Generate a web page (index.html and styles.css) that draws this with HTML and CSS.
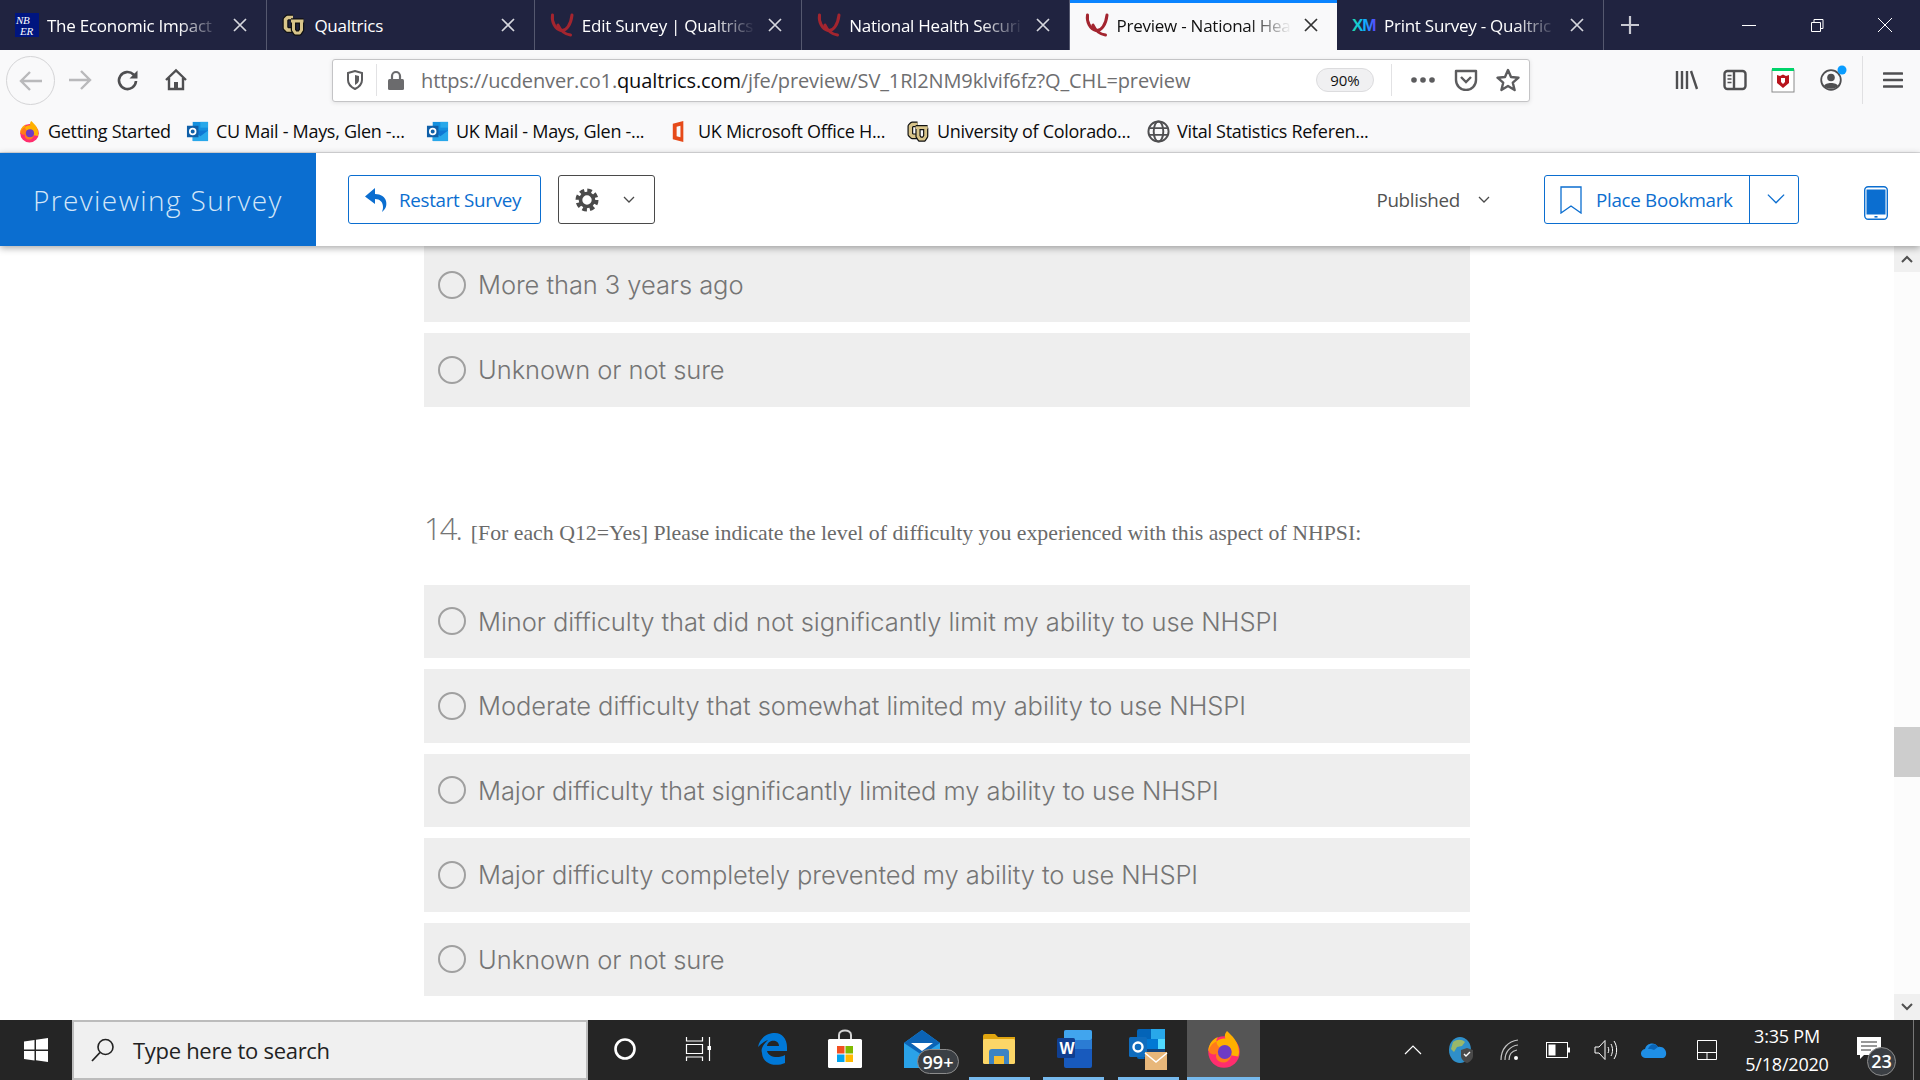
FILE: index.html
```html
<!DOCTYPE html>
<html lang="en">
<head>
<meta charset="utf-8">
<title>Preview - National Health Security Survey</title>
<link rel="stylesheet" href="styles.css">
</head>
<body>
<svg class="defs" width="0" height="0" aria-hidden="true">
  <defs>
    <symbol id="q" viewBox="0 0 24 24"><path d="M2.500 2C1.500 9 5 16 11 17.500 16.500 18.500 21 11 22 2M8 12C10 16.500 13.500 21 20.500 22" fill="none" stroke="#a3252f" stroke-width="3" stroke-linecap="round"/></symbol>
    <symbol id="cu" viewBox="0 0 24 24"><g fill="none" stroke-linejoin="round"><path d="M11 4.500H5.500L3.500 6.500V15L5.500 17H11" stroke="#111" stroke-width="6"/><path d="M11 4.500H5.500L3.500 6.500V15L5.500 17H11" stroke="#d8c48a" stroke-width="3.500"/><path d="M9 8H21.500M11.500 8V17L13.500 20H17.500L19.500 17V8" stroke="#111" stroke-width="5.500"/><path d="M9 8H21.500M11.500 8V17L13.500 20H17.500L19.500 17V8" stroke="#d8c48a" stroke-width="3"/></g></symbol>
    <symbol id="ol" viewBox="0 0 24 24"><rect x="7" y="2" width="16" height="11" fill="#1490df"/><rect x="15" y="2" width="8" height="6" fill="#28a8ea"/><path d="M7 11h16v11H7z" fill="#0f78d4"/><path d="M7 11l8 6 8-6v11H7z" fill="#28a8ea"/><rect x="1" y="6" width="12" height="12" fill="#0f5fa8"/><circle cx="7" cy="12" r="3" fill="none" stroke="#fff" stroke-width="1.800"/></symbol>
    <symbol id="x" viewBox="0 0 16 16"><path d="M2 2l12 12M14 2L2 14" fill="none" stroke="currentColor" stroke-width="1.700"/></symbol>
    <symbol id="chev" viewBox="0 0 12 8"><path d="M1 1l5 5 5-5" fill="none" stroke="currentColor"/></symbol>
    <symbol id="ff" viewBox="0 0 24 26"><circle cx="12" cy="15" r="10.500" fill="#ff2d6e"/><path d="M1.500 14C2 9 5 6 8 5c-1 1-1 2-1 3 2-2 4-2 6-2-1-2 0-4 1-5 3 3 8 7 8 14 0 1-.2 2-.6 3L4 15z" fill="#ffb000"/><path d="M2 15c0-3 2-6 5-7 0 2 1 3 2 4 3-2 7-1 8 2 1 4-2 8-5 8-5 0-6-4-5-6-1 1-3 1-5-1z" fill="#ff7a1a"/><circle cx="12.500" cy="15" r="4.600" fill="#6e3bc4"/></symbol>
  </defs>
</svg>

<div class="tabbar">
  <div class="tab">
    <svg class="fav" viewBox="0 0 24 24"><rect width="24" height="24" fill="#00157f"/><text x="1" y="11" class="nber">NB</text><text x="5" y="22" class="nber">ER</text></svg>
    <span class="tab-title">The Economic Impact</span>
    <svg class="close"><use href="#x"/></svg>
  </div>
  <div class="tab">
    <svg class="fav"><use href="#cu"/></svg>
    <span class="tab-title tab-title-full">Qualtrics</span>
    <svg class="close"><use href="#x"/></svg>
  </div>
  <div class="tab">
    <svg class="fav"><use href="#q"/></svg>
    <span class="tab-title">Edit Survey | Qualtrics</span>
    <svg class="close"><use href="#x"/></svg>
  </div>
  <div class="tab">
    <svg class="fav"><use href="#q"/></svg>
    <span class="tab-title">National Health Securi</span>
    <svg class="close"><use href="#x"/></svg>
  </div>
  <div class="tab tab-active">
    <svg class="fav"><use href="#q"/></svg>
    <span class="tab-title">Preview - National Hea</span>
    <svg class="close"><use href="#x"/></svg>
  </div>
  <div class="tab">
    <svg class="fav" viewBox="0 0 24 24"><defs><linearGradient id="xm" x1="0" x2="1"><stop offset="0" stop-color="#21dbaa"/><stop offset=".5" stop-color="#0bb6ff"/><stop offset="1" stop-color="#5f3dff"/></linearGradient></defs><text x="0" y="18" class="xm" fill="url(#xm)">XM</text></svg>
    <span class="tab-title">Print Survey - Qualtric</span>
    <svg class="close"><use href="#x"/></svg>
  </div>
  <div class="newtab">
    <svg width="20" height="20" viewBox="0 0 20 20"><path d="M10 1v18M1 10h18" stroke="#c8c9d2" stroke-width="2.200"/></svg>
  </div>
  <div class="winctl">
    <svg width="16" height="16" viewBox="0 0 16 16"><path d="M1 8.500h14" stroke="#fff"/></svg>
    <svg width="16" height="16" viewBox="0 0 16 16"><path d="M2.500 5.500h9v9h-9zM5 5V2.500h9v9h-2.500" fill="none" stroke="#fff"/></svg>
    <svg width="16" height="16" viewBox="0 0 16 16"><path d="M1 1l14 14M15 1L1 15" stroke="#fff"/></svg>
  </div>
</div>

<div class="navbar">
  <div class="back">
    <svg width="26" height="24" viewBox="0 0 26 24"><path d="M24 12H3M12 3l-9 9 9 9" fill="none" stroke="#b9b9bb" stroke-width="2.400"/></svg>
  </div>
  <div class="navbtn">
    <svg width="26" height="24" viewBox="0 0 26 24"><path d="M2 12h21M14 3l9 9-9 9" fill="none" stroke="#b9b9bb" stroke-width="2.400"/></svg>
  </div>
  <div class="navbtn">
    <svg width="24" height="24" viewBox="0 0 24 24"><path d="M20 13a8.500 8.500 0 1 1-2.500-6.500L20 9" fill="none" stroke="#4f4f51" stroke-width="2.600"/><path d="M21.500 2.500v8h-8z" fill="#4f4f51"/></svg>
  </div>
  <div class="navbtn">
    <svg width="24" height="24" viewBox="0 0 24 24"><path d="M2 12L12 2.500 22 12M5 10v11h14V10" fill="none" stroke="#4f4f51" stroke-width="2.400"/><rect x="10" y="14" width="4" height="7" fill="#4f4f51"/></svg>
  </div>
  <div class="urlbar">
    <div class="shield">
      <svg width="18" height="20" viewBox="0 0 18 20"><path d="M2 3l7-2 7 2v7c0 4-3 7-7 9-4-2-7-5-7-9z" fill="none" stroke="#5c5c5e" stroke-width="2"/><path d="M9 5l4 1v4c0 2-2 4-4 5z" fill="#5c5c5e"/></svg>
    </div>
    <div class="lock">
      <svg width="18" height="21" viewBox="0 0 18 21"><path d="M5 9V6a4 4 0 0 1 8 0v3" fill="none" stroke="#6b6b6d" stroke-width="2.200"/><rect x="1" y="9" width="16" height="11" rx="1.500" fill="#6b6b6d"/></svg>
    </div>
    <div class="url"><span class="url-dim">https://ucdenver.co1.</span><span class="url-host">qualtrics.com</span><span class="url-dim">/jfe/preview/SV_1Rl2NM9klvif6fz?Q_CHL=preview</span></div>
    <div class="zoompill">90%</div>
    <div class="urlsep"></div>
    <div class="urlicons">
      <svg width="26" height="8" viewBox="0 0 26 8"><circle cx="4" cy="4" r="2.800" fill="#5c5c5e"/><circle cx="13" cy="4" r="2.800" fill="#5c5c5e"/><circle cx="22" cy="4" r="2.800" fill="#5c5c5e"/></svg>
      <svg width="24" height="22" viewBox="0 0 24 22"><path d="M2 2h20v9a10 10 0 0 1-20 0z" fill="none" stroke="#5c5c5e" stroke-width="2.400" stroke-linejoin="round"/><path d="M7 8l5 5 5-5" fill="none" stroke="#5c5c5e" stroke-width="2.400"/></svg>
      <svg width="24" height="24" viewBox="0 0 24 24"><path d="M12 2l3 7 7.500.7-5.700 5 1.800 7.300L12 18l-6.600 4 1.800-7.300-5.700-5L9 9z" fill="none" stroke="#5c5c5e" stroke-width="2.400" stroke-linejoin="round"/></svg>
    </div>
  </div>
  <div class="tools">
    <svg width="24" height="22" viewBox="0 0 24 22"><path d="M2 2v18M7 2v18M12 2v18M16 2l6 18" stroke="#4f4f51" stroke-width="2.400" fill="none"/></svg>
    <svg width="24" height="22" viewBox="0 0 24 22"><rect x="1.500" y="2" width="21" height="18" rx="3" fill="none" stroke="#4f4f51" stroke-width="2.400"/><path d="M11 2v18" stroke="#4f4f51" stroke-width="2.400"/><path d="M4.500 6.500h4M4.500 10h4M4.500 13.500h4" stroke="#4f4f51" stroke-width="1.600"/></svg>
    <svg width="24" height="26" viewBox="0 0 24 26"><rect x="1" y="3" width="22" height="22" fill="#fff" stroke="#8a8a8a"/><rect x="1" y="1" width="22" height="3" fill="#00d46a"/><path d="M6 8l3 1 3-1.500L15 9l3-1v8l-6 5-6-5z" fill="#b8141d"/><path d="M10 11h4v4l-2 2-2-2z" fill="#fff"/></svg>
    <svg class="acct" width="24" height="24" viewBox="0 0 24 24"><circle cx="12" cy="12" r="9.800" fill="none" stroke="#4f4f51" stroke-width="1.800"/><circle cx="12" cy="9.500" r="3.800" fill="#4f4f51"/><path d="M5 18c1-4 13-4 14 0-3 3.500-11 3.500-14 0z" fill="#4f4f51"/><circle cx="23" cy="2" r="4.500" fill="#0a9dff"/></svg>
    <div class="toolsep"></div>
    <svg width="20" height="18" viewBox="0 0 20 18"><path d="M1 2.500h18M1 9h18M1 15.500h18" stroke="#4f4f51" stroke-width="2.600" stroke-linecap="round"/></svg>
  </div>
</div>

<div class="bookmarks">
  <div class="bm"><svg class="bm-icon"><use href="#ff"/></svg><span>Getting Started</span></div>
  <div class="bm"><svg class="bm-icon"><use href="#ol"/></svg><span>CU Mail - Mays, Glen -...</span></div>
  <div class="bm"><svg class="bm-icon"><use href="#ol"/></svg><span>UK Mail - Mays, Glen -...</span></div>
  <div class="bm"><svg class="bm-icon" viewBox="0 0 24 24"><path d="M5 4l11-3v22L5 20z" fill="#e64a19"/><path d="M9 7l4-1v12l-4-1z" fill="#f9f9fa"/></svg><span>UK Microsoft Office H...</span></div>
  <div class="bm"><svg class="bm-icon"><use href="#cu"/></svg><span>University of Colorado...</span></div>
  <div class="bm"><svg class="bm-icon" viewBox="0 0 24 24"><g fill="none" stroke="#4f4f51" stroke-width="2"><circle cx="12" cy="12" r="10.500"/><ellipse cx="12" cy="12" rx="5" ry="10.500"/><path d="M2 8.500h20M2 15.500h20"/></g></svg><span>Vital Statistics Referen...</span></div>
</div>

<header class="survey-head">
  <div class="brand">Previewing Survey</div>
  <button class="btn btn-restart">
    <svg width="24" height="26" viewBox="0 0 24 26"><path d="M11 1L1 9.500 11 17v-5c5 0 8 3 8 8 0 2-.5 3.500-1 5 4-3 5-7 4-11-1-4-5-7-11-7z" fill="#0b6ed0"/></svg>
    Restart Survey
  </button>
  <button class="btn btn-gear">
    <svg width="26" height="26" viewBox="0 0 26 26"><circle cx="13" cy="13" r="9.500" fill="none" stroke="#4a4a4a" stroke-width="4" stroke-dasharray="4.500 2.960"/><circle cx="13" cy="13" r="6.500" fill="none" stroke="#4a4a4a" stroke-width="3.600"/></svg>
    <svg class="chev-sm"><use href="#chev"/></svg>
  </button>
  <div class="published">Published <svg class="chev-sm"><use href="#chev"/></svg></div>
  <div class="bookmark-split">
    <div class="bookmark-main">
      <svg width="22" height="28" viewBox="0 0 22 28"><path d="M1 1h20v26l-10-7-10 7z" fill="none" stroke="#0b6ed0" stroke-width="1.300"/></svg>
      Place Bookmark
    </div>
    <div class="bookmark-drop"><svg class="chev-lg"><use href="#chev"/></svg></div>
  </div>
  <svg class="phone" width="24" height="34" viewBox="0 0 24 34"><rect x=".7" y=".7" width="22.600" height="32.600" rx="3.500" fill="#fff" stroke="#0b6ed0" stroke-width="1.400"/><rect x="2.500" y="3.500" width="19" height="25" fill="#0b6ed0"/><rect x="10.500" y="30" width="3" height="1.600" fill="#0b6ed0"/></svg>
</header>

<div class="content">
  <main class="survey">
    <div class="options">
      <label class="option option-cut"><span class="radio"></span>More than 3 years ago</label>
      <label class="option"><span class="radio"></span>Unknown or not sure</label>
    </div>
    <div class="question">
      <span class="qnum">14.</span>
      <span class="qtext">[For each Q12=Yes] Please indicate the level of difficulty you experienced with this aspect of NHPSI:</span>
    </div>
    <div class="options">
      <label class="option"><span class="radio"></span>Minor difficulty that did not significantly limit my ability to use NHSPI</label>
      <label class="option"><span class="radio"></span>Moderate difficulty that somewhat limited my ability to use NHSPI</label>
      <label class="option"><span class="radio"></span>Major difficulty that significantly limited my ability to use NHSPI</label>
      <label class="option"><span class="radio"></span>Major difficulty completely prevented my ability to use NHSPI</label>
      <label class="option"><span class="radio"></span>Unknown or not sure</label>
    </div>
  </main>
  <div class="scrollbar">
    <div class="sb-btn"><svg width="12" height="8" viewBox="0 0 12 8"><path d="M1 7l5-5 5 5" fill="none" stroke="#505050" stroke-width="2"/></svg></div>
    <div class="sb-track"><div class="sb-thumb"></div></div>
    <div class="sb-btn"><svg width="12" height="8" viewBox="0 0 12 8"><path d="M1 1l5 5 5-5" fill="none" stroke="#505050" stroke-width="2"/></svg></div>
  </div>
</div>

<footer class="taskbar">
  <div class="start">
    <svg width="26" height="26" viewBox="0 0 26 26"><path d="M1 4.500l10.500-1.500v9.500H1zM13 2.800L25 1v11.500H13zM1 14h10.500v9.500L1 22zM13 14h12v11l-12-1.700z" fill="#fff"/></svg>
  </div>
  <div class="search">
    <svg width="26" height="26" viewBox="0 0 26 26"><circle cx="15.500" cy="10" r="7.500" fill="none" stroke="#222" stroke-width="1.600"/><path d="M10 15.500L2 24" stroke="#222" stroke-width="1.800"/></svg>
    <span>Type here to search</span>
  </div>
  <div class="task-icons">
    <div class="task"><svg width="24" height="24" viewBox="0 0 24 24"><circle cx="12" cy="12" r="9.500" fill="none" stroke="#fff" stroke-width="2.600"/></svg></div>
    <div class="task"><svg width="26" height="26" viewBox="0 0 26 26"><path d="M1.500 1v4h16V1M1.500 8.500h16v9h-16zM1.500 25v-4h16v4M24.500 1v9M24.500 14v11" fill="none" stroke="#fff" stroke-width="1.200"/><rect x="22.500" y="10" width="4" height="4" fill="#fff"/></svg></div>
    <div class="task"><svg width="32" height="34" viewBox="0 0 32 34"><path d="M2 15C4 5 12 1 19 1c7 0 12 6 12 14v4H11c1 6 11 8 18 4v8c-9 4-22 2-23-10-1-3 0-5 1-7 1-2 3-4 5-6-3 1-7 4-10 7zm9-1h12c0-7-11-7-12 0z" fill="#0078d7"/></svg></div>
    <div class="task"><svg width="36" height="40" viewBox="0 0 36 40"><path d="M12 11V6c0-6 12-6 12 0v5" fill="none" stroke="#d4d4d4" stroke-width="2"/><rect x="1" y="10" width="34" height="29" rx="1.500" fill="#fff"/><rect x="10" y="17" width="7.500" height="7.500" fill="#f25022"/><rect x="18.500" y="17" width="7.500" height="7.500" fill="#7fba00"/><rect x="10" y="25.500" width="7.500" height="7.500" fill="#00a4ef"/><rect x="18.500" y="25.500" width="7.500" height="7.500" fill="#ffb900"/></svg></div>
    <div class="task task-mail">
      <svg width="36" height="40" viewBox="0 0 36 40"><path d="M18 1L36 14v25H0V14z" fill="#2aa2e8"/><path d="M18 1L36 14 18 26 0 14z" fill="#0b63b5"/><path d="M7 14h22l-11 8z" fill="#fff"/></svg>
      <span class="badge">99+</span>
    </div>
    <div class="task task-run"><svg width="34" height="32" viewBox="0 0 34 32"><path d="M1 3a2 2 0 0 1 2-2h10l3 3h17v26H1z" fill="#e0a50f"/><rect x="1" y="6" width="32" height="25" rx="1.500" fill="#fcd667"/><path d="M7 31V19a3 3 0 0 1 3-3h14a3 3 0 0 1 3 3v12h-5v-8H12v8z" fill="#3c84c4"/><rect x="12" y="23" width="10" height="8" fill="#f5bf33"/></svg></div>
    <div class="task task-run"><svg width="36" height="40" viewBox="0 0 36 40"><rect x="8" y="1" width="28" height="38" rx="2" fill="#185abd"/><rect x="8" y="1" width="28" height="10" rx="2" fill="#41a5ee"/><rect x="8" y="11" width="28" height="9" fill="#2b7cd3"/><rect x="1" y="9" width="18" height="20" rx="1.500" fill="#103f91"/><text x="3.500" y="25" class="word">W</text></svg></div>
    <div class="task task-run"><svg width="40" height="42" viewBox="0 0 40 42"><rect x="9" y="1" width="28" height="30" rx="2" fill="#0364b8"/><rect x="23" y="1" width="14" height="10" fill="#28a8ea"/><rect x="16" y="11" width="14" height="10" fill="#0078d4"/><rect x="30" y="11" width="7" height="10" fill="#50d9ff"/><rect x="16" y="21" width="21" height="10" fill="#14447d"/><rect x="1" y="9" width="18" height="20" rx="1.500" fill="#0f6cbd"/><circle cx="10" cy="19" r="4.500" fill="none" stroke="#fff" stroke-width="2.400"/><rect x="17" y="24" width="22" height="18" fill="#e8b77a"/><path d="M17 25l11 9 11-9" fill="none" stroke="#fff" stroke-width="1.600"/></svg></div>
    <div class="task task-run task-active"><svg width="36" height="40"><use href="#ff"/></svg></div>
  </div>
  <div class="tray">
    <svg class="tray-chev" width="18" height="10" viewBox="0 0 18 10"><path d="M1 9l8-8 8 8" fill="none" stroke="#fff" stroke-width="1.200"/></svg>
    <svg class="tray-globe" width="24" height="28" viewBox="0 0 24 28"><ellipse cx="11" cy="14" rx="11" ry="13" fill="#2f8fc9"/><path d="M4 6c4-3 9-3 12 0l-3 4-5 1-3 5-3-3z" fill="#9ab86a"/><path d="M12 14l6-2 6 2v6c0 3-3 6-6 7-3-1-6-4-6-7z" fill="#4a4a4a"/><path d="M15 18l2 2 4-4" fill="none" stroke="#fff" stroke-width="1.400"/></svg>
    <svg class="tray-wifi" width="20" height="22" viewBox="0 0 20 22"><g fill="none" stroke="#c4c4c4" stroke-width="1.200"><path d="M1 21C1 10 8 2 18 1"/><path d="M5 21C5 13 10 7 18 6"/><path d="M9 21c0-5 3-9 8-10"/></g><circle cx="16" cy="19" r="2" fill="#fff"/></svg>
    <svg class="tray-batt" width="24" height="16" viewBox="0 0 24 16"><rect x=".5" y=".5" width="21" height="15" fill="none" stroke="#fff"/><rect x="2.500" y="2.500" width="7" height="11" fill="#fff"/><rect x="22" y="5.500" width="2" height="5" fill="#fff"/></svg>
    <svg class="tray-vol" width="24" height="22" viewBox="0 0 24 22"><path d="M1 8h4l6-6.500v19L5 14H1z" fill="none" stroke="#fff"/><path d="M14 8c1 2 1 4 0 6M17 5c2 4 2 8 0 12M20 2c3.500 5 3.500 13 0 18" fill="none" stroke="#fff"/></svg>
    <svg class="tray-cloud" width="26" height="18" viewBox="0 0 26 18"><path d="M5 17a4.500 4.500 0 0 1-1-9C5 2 14 0 17 6c5-1 9 3 8 8-.5 2-2 3-3 3z" fill="#1f8fe6"/><path d="M7 8C9 2 15 2 17 6l-4 3-3-1z" fill="#0a64b5"/></svg>
    <svg class="tray-tablet" width="20" height="20" viewBox="0 0 20 20"><path d="M.5.500h19v19H.500zM.5 12.500h19M10 12.500v7" fill="none" stroke="#fff"/></svg>
    <div class="clock"><span>3:35 PM</span><span>5/18/2020</span></div>
    <div class="notif">
      <svg width="26" height="24" viewBox="0 0 26 24"><path d="M1 1h24v18H8l-4 4v-4H1z" fill="#fff"/><path d="M5 6h16M5 10h16M5 14h10" stroke="#333" stroke-width="1.200"/></svg>
      <span class="badge badge-round">23</span>
    </div>
    <div class="desk-sep"></div>
  </div>
</footer>
</body>
</html>
```

FILE: styles.css
```css
* { box-sizing: border-box; }
html, body { margin: 0; padding: 0; height: 100%; }
body {
  width: 1920px;
  height: 1080px;
  overflow: hidden;
  display: flex;
  flex-direction: column;
  background: #fff;
  font-family: "Open Sans", "Noto Sans", sans-serif;
}
.defs { position: absolute; }

/* tab strip */
.tabbar { height: 50px; background: #202340; display: flex; flex: none; color: #fff; }
.tab {
  width: 267.4px;
  height: 50px;
  display: flex;
  align-items: center;
  padding: 0 18px 0 15px;
  border-right: 1px solid #55586f;
  flex: none;
  font-size: 17px;
  letter-spacing: -.25px;
}
.fav { width: 24px; height: 24px; flex: none; margin-right: 8px; }
.tab-title {
  flex: 1;
  min-width: 0;
  white-space: nowrap;
  overflow: hidden;
  -webkit-mask-image: linear-gradient(to right, #000 74%, transparent 98%);
  mask-image: linear-gradient(to right, #000 74%, transparent 98%);
}
.tab-title-full { -webkit-mask-image: none; mask-image: none; }
.close { width: 16px; height: 16px; flex: none; color: #d6d7de; margin-left: 8px; }
.tab-active { background: #f9f9fa; color: #111; border-right: 0; border-top: 3px solid #0a84ff; padding-bottom: 3px; }
.tab-active .close { color: #333; }
.nber { font: italic 11px "Liberation Serif", serif; fill: #fff; }
.xm { font: 700 17px "Liberation Sans", sans-serif; letter-spacing: -1px; }
.newtab { width: 52px; display: flex; align-items: center; justify-content: center; flex: none; }
.winctl { flex: 1; display: flex; align-items: center; padding-left: 85px; gap: 52px; }

/* nav */
.navbar { height: 60px; background: #f9f9fa; display: flex; align-items: center; padding-left: 6px; flex: none; }
.back { width: 49px; height: 49px; border: 1px solid #d4d4d6; border-radius: 50%; display: flex; align-items: center; justify-content: center; flex: none; margin-top: 1px; }
.navbtn { width: 48px; display: flex; justify-content: center; flex: none; }
.navbar .navbtn:nth-child(2) { margin-left: 1px; }
.urlbar {
  width: 1198px;
  height: 43px;
  margin-left: 132px;
  background: #fff;
  border: 1px solid #c4c4c6;
  border-radius: 3px;
  box-shadow: 0 1px 4px rgba(0,0,0,.1);
  display: flex;
  align-items: center;
  flex: none;
}
.shield { width: 44px; height: 32px; display: flex; align-items: center; justify-content: center; border-right: 1px solid #e2e2e4; flex: none; }
.lock { width: 44px; display: flex; justify-content: center; flex: none; padding-right: 6px; }
.url { flex: 1; font-size: 20px; white-space: nowrap; letter-spacing: -.13px; color: #6e6e70; }
.url-host { color: #0c0c0d; }
.zoompill { width: 58px; height: 24px; border-radius: 12px; background: #f0f0f2; border: 1px solid #dcdcde; font-size: 15px; display: flex; align-items: center; justify-content: center; color: #111; flex: none; }
.urlsep { width: 1px; height: 32px; background: #e2e2e4; margin-left: 17px; flex: none; }
.urlicons { display: flex; align-items: center; gap: 18px; padding: 0 9px 0 18px; flex: none; }
.tools { flex: 1; display: flex; align-items: center; padding-left: 145px; gap: 24px; }
.acct { overflow: visible; }
.toolsep { width: 1px; height: 48px; background: #e0e0e2; margin: 0 -4px 0 -5px; }

/* bookmarks */
.bookmarks { height: 43px; background: #f9f9fa; border-bottom: 1px solid #dedee0; display: grid; grid-template-columns: 168px 240px 242px 239px 240px auto; justify-content: start; align-items: center; padding-left: 18px; flex: none; font-size: 18px; color: #0c0c0d; letter-spacing: -.3px; }
.bm { display: flex; align-items: center; gap: 7px; white-space: nowrap; }
.bm-icon { width: 23px; height: 23px; flex: none; }

/* survey header */
.survey-head { height: 93px; background: #fff; display: flex; align-items: center; box-shadow: 0 2px 7px rgba(0,0,0,.35); position: relative; z-index: 2; flex: none; }
.brand { width: 316px; height: 93px; background: #0b6ed0; color: #d3e6f8; font: 300 28px/95px "Open Sans", sans-serif; letter-spacing: 1.4px; padding-left: 33px; white-space: nowrap; flex: none; }
.btn { height: 49px; background: #fff; border-radius: 3px; font: 18.8px "Open Sans", sans-serif; display: flex; align-items: center; padding: 0; flex: none; }
.btn-restart { width: 193px; margin-left: 32px; border: 1px solid #0b6ed0; color: #0b6ed0; padding-left: 15px; gap: 11px; letter-spacing: -.3px; white-space: nowrap; }
.btn-gear { width: 97px; margin-left: 17px; border: 1px solid #4a4a4a; padding-left: 15px; color: #4a4a4a; gap: 23px; }
.chev-sm { width: 12px; height: 8px; color: #4a4a4a; flex: none; stroke-width: 1.300; }
.published { margin-left: auto; color: #525252; font-size: 18.8px; letter-spacing: -.3px; display: flex; align-items: center; gap: 18px; }
.bookmark-split { width: 255px; height: 49px; margin-left: 54px; border: 1px solid #0b6ed0; border-radius: 3px; display: flex; color: #0b6ed0; font-size: 18.8px; letter-spacing: -.3px; flex: none; }
.bookmark-main { flex: 1; display: flex; align-items: center; padding-left: 15px; gap: 14px; border-right: 1px solid #0b6ed0; white-space: nowrap; }
.bookmark-drop { width: 48px; display: flex; align-items: center; justify-content: center; padding-left: 3px; flex: none; }
.chev-lg { width: 20px; height: 13px; color: #0b6ed0; stroke-width: .8; }
.phone { margin-left: 65px; margin-right: 32px; margin-top: 6px; flex: none; }

/* content */
.content { flex: 1; min-height: 0; display: flex; overflow: hidden; }
.survey { flex: 1; padding-left: 424px; overflow: hidden; }
.options { width: 1046px; display: flex; flex-direction: column; gap: 11px; }
.option {
  height: 73.5px;
  flex: none;
  background: #eee;
  display: flex;
  align-items: center;
  padding-left: 14px;
  color: #757575;
  font: 300 25.5px "Inter", sans-serif;
  letter-spacing: -.07px;
  white-space: nowrap;
}
.option-cut { height: 76px; padding-top: 1.5px; }
.radio { width: 28px; height: 28px; border: 2px solid #a0a0a0; border-radius: 50%; background: transparent; margin-right: 12px; flex: none; }
.question { margin-top: 101px; margin-bottom: 29px; height: 48px; display: flex; align-items: baseline; color: #757575; }
.qnum { font: 300 31px/40px "Open Sans", sans-serif; letter-spacing: -2px; margin-right: 10px; }
.qtext { font: 21.8px "Liberation Serif", serif; color: #6a6a6a; }

/* scrollbar */
.scrollbar { width: 26px; flex: none; background: #fcfcfc; display: flex; flex-direction: column; }
.sb-btn { height: 26px; background: #f0f0f0; display: flex; align-items: center; justify-content: center; flex: none; }
.sb-track { flex: 1; padding-top: 455px; }
.sb-thumb { height: 50px; background: #cdcdcd; }

/* taskbar */
.taskbar { height: 60px; background: #252525; display: flex; align-items: stretch; flex: none; color: #fff; }
.start { width: 72px; display: flex; align-items: center; justify-content: center; flex: none; }
.search { width: 516px; background: #f0f0f0; border: 2px solid #bcbcbc; display: flex; align-items: center; padding-left: 16px; gap: 17px; color: #222; font-size: 22px; letter-spacing: -.3px; flex: none; }
.task-icons { display: flex; flex: none; }
.task { width: 73.5px; display: flex; align-items: center; justify-content: center; position: relative; flex: none; border-bottom: 3px solid transparent; padding-top: 1px; }
.task-run { border-bottom-color: #76b9ed; margin: 0 6.75px; width: 61px; }
.task-active { background: #555; margin: 0 0 0 1.5px; width: 73px; }
.badge { position: absolute; left: 35px; top: 29px; width: 42px; height: 25px; border-radius: 13px; background: #3b3f44; border: 1px solid #8c8c8c; color: #fff; font-size: 18px; font-weight: 600; display: flex; align-items: center; justify-content: center; }
.task-mail { width: 80px; }
.tray { flex: 1; display: flex; align-items: center; padding-left: 144px; position: relative; }
.tray-chev { margin-right: 27px; }
.tray-globe { margin-right: 27px; }
.tray-wifi { margin-right: 26px; }
.tray-batt { margin-right: 24px; }
.tray-vol { margin-right: 23px; }
.tray-cloud { margin-right: 30px; }
.tray-tablet { margin-right: 14px; }
.clock { width: 112px; display: flex; flex-direction: column; align-items: center; gap: 5px; font-size: 18px; line-height: 23px; letter-spacing: -.2px; }
.notif { margin-left: 13px; position: relative; }
.badge-round { left: 11px; top: 11px; width: 29px; height: 29px; border-radius: 50%; font-size: 18px; }
.desk-sep { position: absolute; right: 6px; top: 0; bottom: 0; width: 1px; background: #777; }

/* svg text */
.word { font: 700 16px "Liberation Sans", sans-serif; fill: #fff; }
```
